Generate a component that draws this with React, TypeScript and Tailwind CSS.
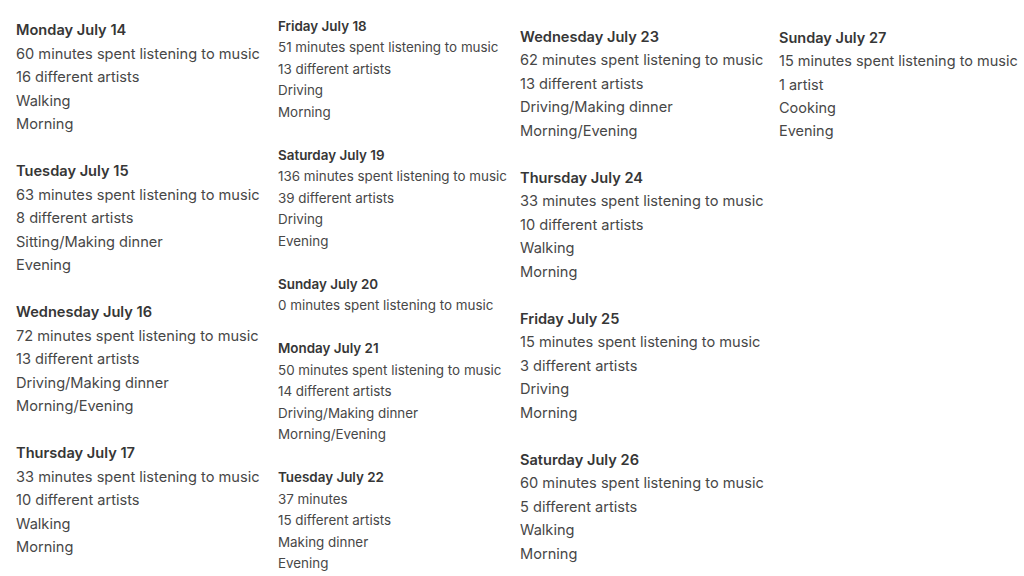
type Day = { title: string; lines: string[] };

const col1: Day[] = [
  { title: 'Monday July 14', lines: ['60 minutes spent listening to music', '16 different artists', 'Walking', 'Morning'] },
  { title: 'Tuesday July 15', lines: ['63 minutes spent listening to music', '8 different artists', 'Sitting/Making dinner', 'Evening'] },
  { title: 'Wednesday July 16', lines: ['72 minutes spent listening to music', '13 different artists', 'Driving/Making dinner', 'Morning/Evening'] },
  { title: 'Thursday July 17', lines: ['33 minutes spent listening to music', '10 different artists', 'Walking', 'Morning'] },
];

const col2: Day[] = [
  { title: 'Friday July 18', lines: ['51 minutes spent listening to music', '13 different artists', 'Driving', 'Morning'] },
  { title: 'Saturday July 19', lines: ['136 minutes spent listening to music', '39 different artists', 'Driving', 'Evening'] },
  { title: 'Sunday July 20', lines: ['0 minutes spent listening to music'] },
  { title: 'Monday July 21', lines: ['50 minutes spent listening to music', '14 different artists', 'Driving/Making dinner', 'Morning/Evening'] },
  { title: 'Tuesday July 22', lines: ['37 minutes', '15 different artists', 'Making dinner', 'Evening'] },
];

const col3: Day[] = [
  { title: 'Wednesday July 23', lines: ['62 minutes spent listening to music', '13 different artists', 'Driving/Making dinner', 'Morning/Evening'] },
  { title: 'Thursday July 24', lines: ['33 minutes spent listening to music', '10 different artists', 'Walking', 'Morning'] },
  { title: 'Friday July 25', lines: ['15 minutes spent listening to music', '3 different artists', 'Driving', 'Morning'] },
  { title: 'Saturday July 26', lines: ['60 minutes spent listening to music', '5 different artists', 'Walking', 'Morning'] },
];

const col4: Day[] = [
  { title: 'Sunday July 27', lines: ['15 minutes spent listening to music', '1 artist', 'Cooking', 'Evening'] },
];

function Entry({ day, small }: { day: Day; small?: boolean }) {
  return (
    <div className={small ? 'mb-[21.5px]' : 'mb-[23.5px]'}>
      <div className="font-semibold text-[#363636]">{day.title}</div>
      {day.lines.map((l) => (
        <div key={l}>{l}</div>
      ))}
    </div>
  );
}

export default function App() {
  return (
    <div
      className="flex h-[576px] w-[1024px] overflow-hidden bg-white text-[#474747]"
      style={{ fontFamily: 'Inter, "Noto Sans", sans-serif' }}
    >
      <div className="ml-4 w-[262px] shrink-0 pt-[19px] text-[14.6px] leading-[23.5px]">
        {col1.map((d) => (
          <Entry key={d.title} day={d} />
        ))}
      </div>
      <div className="w-[242px] shrink-0 pt-[15.5px] text-[13.4px] leading-[21.5px]">
        {col2.map((d) => (
          <Entry key={d.title} day={d} small />
        ))}
      </div>
      <div className="w-[259px] shrink-0 pt-[25.5px] text-[14.6px] leading-[23.5px]">
        {col3.map((d) => (
          <Entry key={d.title} day={d} />
        ))}
      </div>
      <div className="shrink-0 pt-[26px] text-[14.5px] leading-[23.3px]">
        {col4.map((d) => (
          <Entry key={d.title} day={d} />
        ))}
      </div>
    </div>
  );
}
